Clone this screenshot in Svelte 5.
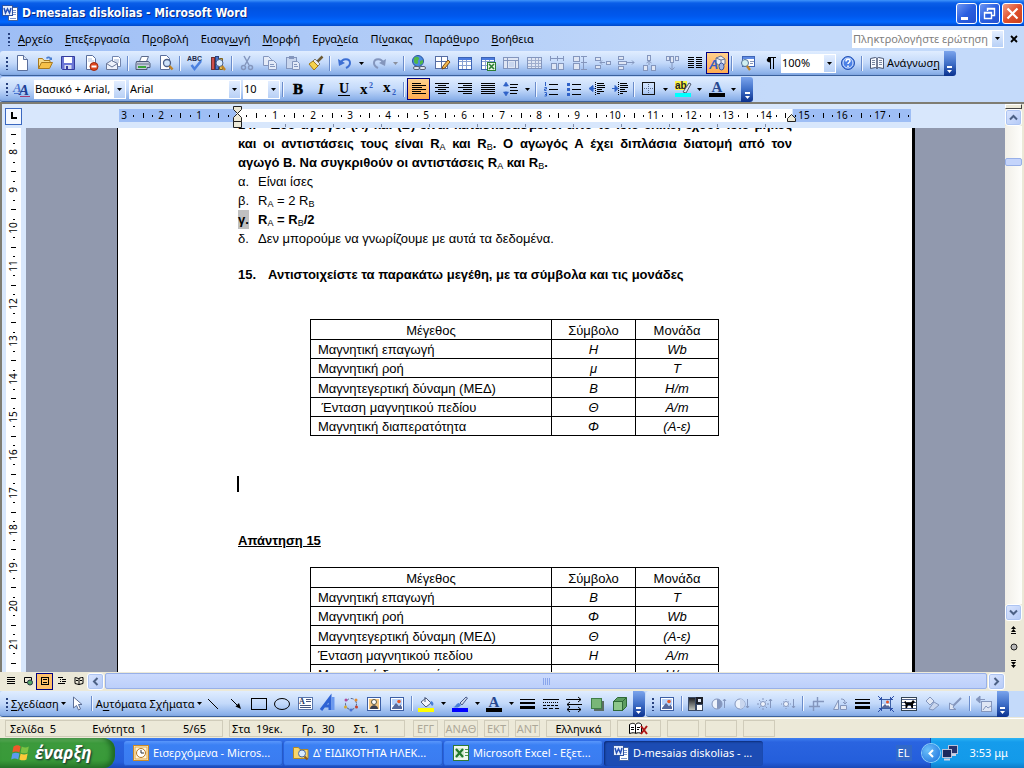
<script>
  const G = '#8496bd';
  const L = '#c9d6ee';
  const page = '<path d="M3.5.5h6l4 4v11h-10z" fill="#fff" stroke="#5a6f9c"/><path d="M9.5.5v4h4" fill="#dbe5f7" stroke="#5a6f9c"/>';
  const lines = (rows, c = '#000') => rows.map(([x, y, w]) => `<path d="M${x} ${y}.5h${w}" stroke="${c}"/>`).join('');
  const grid = (c, head) => `<rect x="1.5" y="2.5" width="13" height="12" fill="#fff" stroke="${c}"/><rect x="2" y="3" width="12" height="2" fill="${head}"/><path d="M2 6.5h12M2 10.5h12M5.5 5v9M9.5 5v9" stroke="${c}" opacity=".6"/>`;
  const smallBox = (x, y, w, h) => `<rect x="${x}.5" y="${y}.5" width="${w}" height="${h}" fill="#dfe6f4" stroke="${G}"/>`;
  const picture = '<rect x="1.5" y="1.5" width="13" height="13" fill="#fff" stroke="#3c5fa5"/><rect x="3" y="3" width="10" height="6" fill="#b9d4fb"/><circle cx="10" cy="5.5" r="1.8" fill="#e2562a"/><path d="M3 12l4-5 3 3 1.5-1.5L13 11v2H3z" fill="#56699c"/>';
  const glyph = (t, x, y, size, fill = '#000', more = '') => `<text x="${x}" y="${y}" font-family="Liberation Serif, serif" font-weight="bold" font-size="${size}" fill="${fill}" ${more}>${t}</text>`;
  const mid = 'text-anchor="middle"';
  const letterA = (c) => glyph('A', 8, 11, 15, '#27488f', mid) + `<rect x="0" y="12" width="16" height="4" fill="${c}"/>`;

  const icons = {
    new: page,
    open: '<path d="M1.5 13.5v-10h4l1.5 2h6v3" fill="#f8dc8c" stroke="#a8791e"/><path d="M1.5 13.5l3-6h11l-3 6z" fill="#f5c04a" stroke="#a8791e"/><path d="M9 3c1-2 4-2 5 0l1-1v3h-3l1-1c-1-1-2-1-3 0z" fill="#4a7ed0"/>',
    save: '<path d="M1.5 1.5h13v13h-12l-1-1z" fill="#6a76d6" stroke="#343c9c"/><rect x="4" y="2" width="8" height="6" fill="#fff"/><rect x="4.5" y="10" width="7" height="4" fill="#d5dbf1"/><rect x="6" y="11" width="2" height="3" fill="#343c9c"/>',
    perm: '<path d="M3.5.5h6l3 3v11h-9z" fill="#fff" stroke="#5a6f9c"/><path d="M5 4h4M5 6h6" stroke="#b2c0dc"/><circle cx="11" cy="11.5" r="4" fill="#e0481f" stroke="#a02a10"/><rect x="8.5" y="10.5" width="5" height="2" fill="#fff"/>',
    mail: '<path d="M6.5 1.5h6l2 2v8h-8z" fill="#fff" stroke="#7184ad"/><path d="M8 5h5M8 7h5" stroke="#9fb2d6"/><path d="M.5 8.5l5-3 6 3v6H.5z" fill="#eef2fb" stroke="#6b7899"/><path d="M.5 8.5l5.5 3.5 5.5-3.5" fill="none" stroke="#6b7899"/>',
    print: '<path d="M4.5 6.5l2-5h7l-2 5" fill="#fff" stroke="#5b6a8b"/><path d="M1.5 6.5h12l1.5 2v4h-3v2h-11v-6z" fill="#c3cbdc" stroke="#4b5877"/><path d="M3 12h8" stroke="#3aa53a" stroke-width="2"/><path d="M2 9h12" stroke="#66748f"/>',
    preview: '<path d="M2.5.5h6l3 3v11h-9z" fill="#fff" stroke="#5a6f9c"/><circle cx="9" cy="8" r="3.5" fill="#cfe4fb" stroke="#4c6089" stroke-width="1.3"/><path d="M11.5 11l3 3.5" stroke="#c08428" stroke-width="2.5"/>',
    spell: '<text x="0" y="6" font-family="Liberation Sans, sans-serif" font-size="7" font-weight="bold" fill="#222c4c">ABC</text><path d="M4.5 10l3 4L14 6" fill="none" stroke="#4a80e0" stroke-width="2.5"/>',
    research: '<rect x="1.5" y="2.5" width="3" height="12" fill="#cf4f4a" stroke="#70302f"/><rect x="5.5" y="1.5" width="3" height="13" fill="#4a72c8" stroke="#28437e"/><path d="M9.5 3.5h3v11h-3z" fill="#e3bd52" stroke="#7c621c"/><circle cx="9.5" cy="8" r="3.5" fill="#d8eafd" stroke="#49608c"/><path d="M12 11l3 4" stroke="#c08428" stroke-width="2.4"/>',
    cut: `<path d="M5 1l5 9M11 1L6 10" stroke="${G}" stroke-width="1.5"/><circle cx="4.5" cy="12.5" r="2" fill="none" stroke="${G}" stroke-width="1.5"/><circle cx="11.5" cy="12.5" r="2" fill="none" stroke="${G}" stroke-width="1.5"/>`,
    copy: `<path d="M1.5 1.5h5l3 3v6h-8z" fill="#e4ebf8" stroke="${G}"/><path d="M6.5 5.5h5l3 3v6h-8z" fill="#e4ebf8" stroke="${G}"/><path d="M8 9.5h4M8 11.5h5" stroke="${G}"/>`,
    paste: `<rect x="1.5" y="2.5" width="10" height="11" fill="${L}" stroke="${G}"/><rect x="4" y="1" width="5" height="3" fill="${G}"/><path d="M7.5 6.5h5l2 2v6h-7z" fill="#e4ebf8" stroke="${G}"/><path d="M9 9.5h3M9 11.5h4" stroke="${G}"/>`,
    painter: '<path d="M14.5 1.5l-5 5" stroke="#6d5a34" stroke-width="2.5"/><path d="M7 4l5 5-2 2-5-5z" fill="#e8e8ee" stroke="#7d7a70"/><path d="M5 6l5 5-4 4L1 9z" fill="#f5d24c" stroke="#a37b18"/>',
    undo: '<path d="M4 8c1-5 9-5 9 0 0 3-2 4-4 5" fill="none" stroke="#3d6fd3" stroke-width="2"/><path d="M1 4l1 7 6-3z" fill="#3d6fd3"/>',
    redo: `<path d="M12 8C11 3 3 3 3 8c0 3 2 4 4 5" fill="none" stroke="${G}" stroke-width="2"/><path d="M15 4l-1 7-6-3z" fill="${G}"/>`,
    link: '<circle cx="7" cy="6" r="5.5" fill="#4a8ae0" stroke="#2a55a0"/><path d="M3 3c3-2 4-1 5 0s-2 2-1 4-3 3-4 0zM9 6l3-1v3l-3 2z" fill="#4fb748"/><rect x="2.5" y="11.5" width="6" height="3" rx="1.5" fill="#dfe4ee" stroke="#566178"/><rect x="8.5" y="11.5" width="6" height="3" rx="1.5" fill="#dfe4ee" stroke="#566178"/>',
    tables: '<rect x="1.5" y="1.5" width="12" height="12" fill="#fff" stroke="#566ea4"/><path d="M1.5 6.5h12M7.5 1.5v12" stroke="#566ea4"/><path d="M8 14l1-3 5-6 2 2-5 6z" fill="#f4b84a" stroke="#7a4c18"/>',
    table: grid('#3c64b5', '#4b7be0'),
    excel: grid('#3c64b5', '#4b7be0') + '<rect x="7.5" y="7.5" width="8" height="8" fill="#e5f3e2" stroke="#2b7d32"/><path d="M9 9l5 5M14 9l-5 5" stroke="#2b7d32" stroke-width="1.6"/>',
    insCols: `<rect x=".5" y="2.5" width="15" height="11" fill="#dfe6f4" stroke="${G}"/><path d="M1 5.5h14M4.5 3v10M12.5 6v7" stroke="${G}"/><rect x="6" y="7" width="5" height="5" fill="${L}"/>`,
    grid2: `<rect x="1.5" y="2.5" width="14" height="11" fill="#dfe6f4" stroke="${G}"/><path d="M2 5.5h13M2 8.5h13M2 11.5h13M5.5 3v11M9.5 3v11M12.5 3v11" stroke="${G}" opacity=".7"/>`,
    distR: `<path d="M1 3.5h14M1.5 1v5M8.5 1v5M14.5 1v5" stroke="${G}"/>` + smallBox(2, 8, 5, 6) + smallBox(9, 8, 5, 6),
    distC: smallBox(1, 1, 6, 5) + smallBox(1, 8, 6, 6) + `<path d="M11.5 1v14M9 1.5h6M9 7.5h6M9 14.5h6" stroke="${G}"/>`,
    c1: smallBox(0, 2, 5, 3) + smallBox(0, 10, 5, 3) + smallBox(11, 6, 4, 3) + `<path d="M5 7.5h5M5 7.5l2-2M5 7.5l2 2" stroke="${G}"/>`,
    c2: smallBox(0, 1, 5, 3) + smallBox(0, 6, 8, 3) + smallBox(0, 11, 5, 3) + `<path d="M9 7.5h7M16 7.5l-2-2M16 7.5l-2 2" stroke="${G}"/>`,
    c3: smallBox(6, 0, 3, 5) + smallBox(2, 10, 4, 5) + smallBox(10, 10, 4, 5) + `<path d="M8 6v4M5.5 8l2.5-2 2.5 2" fill="none" stroke="${G}"/>`,
    c4: smallBox(2, 1, 3, 4) + smallBox(6, 1, 3, 6) + smallBox(11, 1, 3, 4) + `<path d="M8 8v7M5.5 12.5L8 15l2.5-2.5" fill="none" stroke="${G}"/>`,
    columns: lines([[1, 2, 6], [9, 2, 6], [1, 4, 6], [9, 4, 6], [1, 6, 6], [9, 6, 6], [1, 8, 6], [9, 8, 6], [1, 10, 6], [9, 10, 6], [1, 12, 6], [9, 12, 6]]),
    drawing: '<path d="M6 3l5-2 4 3v5l-5 2-4-3z" fill="#e9edf5" stroke="#6a7492"/><path d="M6 3l5 2 4-1M11 5v6" fill="none" stroke="#6a7492"/><text x="-1" y="14" font-family="Liberation Sans, sans-serif" font-weight="bold" font-style="italic" font-size="13" fill="#3a5fc4">A</text><ellipse cx="11.5" cy="11.5" rx="2.5" ry="3.5" fill="#9fb5e8" stroke="#3f579e"/>',
    docmap: '<rect x="3.5" y="1.5" width="12" height="10" fill="#fff" stroke="#3e65b6"/><path d="M4 3h11" stroke="#5f8be4" stroke-width="2"/><path d="M11 6.5h4M11 8.5h3" stroke="#8797bb"/><circle cx="6" cy="8" r="3.5" fill="#d1f0f0" stroke="#54769a"/><path d="M8 11l3 4" stroke="#c08428" stroke-width="2.4"/>',
    help: '<circle cx="8" cy="8" r="6.5" fill="#4b80e6" stroke="#2653b4"/><circle cx="8" cy="8" r="5" fill="none" stroke="#dce9ff"/><path d="M6 6.5c0-3 4-3 4-.5 0 1.5-2 1.5-2 3M8 10.5v1.5" fill="none" stroke="#fff" stroke-width="1.5"/>',
    book: '<path d="M1.5 3.5l5-1 1.5 1v10l-1.5-1-5 1zM14.5 3.5l-5-1L8 3.5v10l1.5-1 5 1z" fill="#f7f9ff" stroke="#4a5672"/><path d="M3 5.5h3M3 7.5h3M3 9.5h3M10 5.5h3M10 7.5h3M10 9.5h3" stroke="#7a869f"/>',
    styles: glyph('A', -1, 11, 13, '#4a74cf', 'font-style="italic"') + glyph('A', 5, 14, 15, '#203f96', 'font-style="italic"') + '<path d="M6 15.5h10" stroke="#a43a70"/><path d="M0 12.5h5" stroke="#4a74cf"/>',
    bold: glyph('B', 8, 13, 15, '#000', mid + ' stroke="#000" stroke-width=".6"'),
    italic: glyph('I', 8, 13, 15, '#000', mid + ' font-style="italic"'),
    underline: glyph('U', 8, 12, 14, '#000', mid) + '<path d="M2 14.5h12" stroke="#000"/>',
    sup: glyph('x', 1, 13, 15) + glyph('2', 10, 7, 8, '#2f5ac0'),
    sub: glyph('x', 1, 11, 15) + glyph('2', 10, 14, 8, '#2f5ac0'),
    left: lines([[1, 2, 9], [1, 4, 14], [1, 6, 10], [1, 8, 14], [1, 10, 9], [1, 12, 14]]),
    center: lines([[1, 2, 14], [4, 4, 8], [1, 6, 14], [4, 8, 8], [1, 10, 14], [4, 12, 8]]),
    right: lines([[1, 2, 14], [6, 4, 9], [1, 6, 14], [6, 8, 9], [1, 10, 14], [6, 12, 9]]),
    just: lines([[1, 2, 14], [1, 4, 14], [1, 6, 14], [1, 8, 14], [1, 10, 14], [1, 12, 14]]),
    spacing: lines([[7, 3, 8], [7, 6, 7], [7, 9, 8], [7, 12, 7]]) + '<path d="M3 1L.5 5h5zM3 15L.5 11h5zM3 4v2M3 10v2" fill="#2f62c8" stroke="#2f62c8" stroke-width=".6"/>',
    nums: lines([[6, 3, 9], [6, 8, 9], [6, 13, 9]]) + '<path d="M2.5 1v4M1.5 6.5h2v1.5h-2v1.5h2M1.5 11.5h2v3.5h-2M2 13.5h1" fill="none" stroke="#2f62c8"/>',
    bullets: lines([[6, 3, 9], [6, 8, 9], [6, 13, 9]]) + '<rect x="1" y="2" width="3" height="3" fill="#2f62c8"/><rect x="1" y="7" width="3" height="3" fill="#2f62c8"/><rect x="1" y="12" width="3" height="3" fill="#2f62c8"/>',
    outdent: lines([[8, 2, 7], [8, 4, 8], [8, 6, 8], [8, 8, 5], [8, 10, 7], [8, 12, 3]]) + '<path d="M6.5 1v14" stroke="#000" stroke-dasharray="1 1"/><path d="M0 7.5l4-3v6zM4 7.5h2" fill="#2f62c8" stroke="#2f62c8"/>',
    indent: lines([[8, 2, 7], [8, 4, 8], [8, 6, 8], [8, 8, 5], [8, 10, 7], [8, 12, 3]]) + '<path d="M6.5 1v14" stroke="#000" stroke-dasharray="1 1"/><path d="M6 7.5l-3-3v6zM0 7.5h3" fill="#2f62c8" stroke="#2f62c8"/>',
    border: '<rect x="1.5" y="1.5" width="12" height="12" fill="none" stroke="#111"/><path d="M3 7.5h9M7.5 3v9" stroke="#5d6b8a" stroke-dasharray="1 1"/>',
    highlight: '<rect x="0" y="0" width="12" height="9" fill="#f8f448"/><text x="0" y="8" font-family="Liberation Sans, sans-serif" font-weight="bold" font-size="10" fill="#222">ab</text><path d="M8 11l6-9 2 1-5 9z" fill="#dfe6f2" stroke="#505a70"/><rect y="12" width="16" height="4" fill="#00ffff"/>',
    fontA: letterA('#000'),
    pointer: '<path d="M4.5 1v11l3-2.5 2 4.5 2-1-2-4.5h3.5z" fill="#fff" stroke="#5d6f97"/>',
    line: '<path d="M3 3l10 10" stroke="#000"/>',
    arrow: '<path d="M3 3l7 7" stroke="#000"/><path d="M13 13L7.5 10.5l3.5-3.5z"/>',
    rect: '<rect x=".5" y="2.5" width="15" height="11" fill="none" stroke="#000"/>',
    oval: '<ellipse cx="8" cy="8" rx="7.5" ry="5.5" fill="none" stroke="#000"/>',
    textbox: '<rect x="1.5" y="1.5" width="14" height="12" fill="#fff" stroke="#5876ad"/>' + glyph('A', 2, 8, 8, '#22345f') + '<path d="M9 3.5h5M9 5.5h5M3 9.5h11M3 11.5h11" fill="none" stroke="#43567f"/>',
    wordart: '<path d="M1 14L10 2v12M4 10h6" fill="none" stroke="#2f63d4" stroke-width="3"/><path d="M13 1v13" stroke="#6a98ef" stroke-width="3"/>',
    diagram: '<circle cx="8" cy="8" r="5.5" fill="none" stroke="#54658a" stroke-dasharray="3 2"/><circle cx="3" cy="4" r="1.5" fill="#b04a9c"/><circle cx="13" cy="4" r="1.5" fill="#e28a2a"/><circle cx="2.5" cy="11" r="1.5" fill="#d8a92b"/><circle cx="8" cy="14" r="1.5" fill="#4a72d2"/><circle cx="13.5" cy="11" r="1.5" fill="#c8402c"/>',
    clip: '<rect x="1.5" y="1.5" width="13" height="13" fill="#fff" stroke="#3c5fa5"/><rect x="3" y="3" width="10" height="10" fill="#f4c680"/><circle cx="8" cy="6" r="2.5" fill="#fff" stroke="#554"/><path d="M4 13c0-5 8-5 8 0z" fill="#3a3f50"/>',
    picture,
    fill: '<path d="M3 6l5-4 5 5-5 4z" fill="#f2f4fa" stroke="#4d5a7a"/><path d="M7 1v5" stroke="#4d5a7a"/><path d="M13 5c3 1 3 4 1 5l-2-3z" fill="#4a7ed8"/><rect y="12" width="16" height="4" fill="#ffff00"/>',
    lineColor: '<path d="M1 11c3 0 3-4 6-4l2 2c-2 3-5 3-8 2z" fill="#4a7ed8"/><path d="M8 7l6-6 1.5 1L10 9z" fill="#cfd8ea" stroke="#4a5d8c"/><rect y="12" width="16" height="4" fill="#0000ff"/>',
    weight: '<path d="M0 3.5h15" stroke="#000"/><path d="M0 7h15" stroke="#000" stroke-width="2"/><path d="M0 11.5h15" stroke="#000" stroke-width="3"/>',
    dash: '<path d="M0 3.5h16" stroke="#000"/><path d="M0 6.5h16" stroke="#000" stroke-dasharray="1 1"/><path d="M0 9.5h16" stroke="#000" stroke-dasharray="3 1"/><path d="M0 12.5h16" stroke="#000" stroke-dasharray="4 2"/>',
    arrows: '<path d="M0 3.5h15M1 8.5h15M1 13.5h14M12 1l3 2.5L12 6M4 6L1 8.5 4 11M4 11l-3 2.5L4 16M12 11l3 2.5L12 16" fill="none" stroke="#000"/>',
    shadow: '<rect x="5" y="5" width="10" height="10" fill="#5a6d64"/><rect x="2.5" y="2.5" width="10" height="10" fill="#79b678" stroke="#3f7f48"/>',
    cube: '<path d="M1.5 5.5l4-4h9v9l-4 4h-9z" fill="#5c9d60" stroke="#2e6a38"/><rect x="1.5" y="5.5" width="9" height="9" fill="#8dc78a" stroke="#2e6a38"/><path d="M10.5 5.5l4-4" stroke="#2e6a38"/>',
    color: '<defs><linearGradient id="gr" x2="0" y2="1"><stop stop-color="#16181c"/><stop offset="1" stop-color="#c4c8c0"/></linearGradient></defs><rect x=".5" y="1.5" width="7" height="13" fill="url(#gr)" stroke="#3a4a66"/><rect x="8" y="1" width="7" height="7" fill="#1c2028"/><rect x="8.5" y="8.5" width="6" height="6" fill="#fff" stroke="#3a4a66"/><rect x="10" y="3" width="3" height="3" fill="#dfe6f4"/>',
    con1: `<circle cx="6" cy="8" r="5" fill="#eef3fc" stroke="${G}"/><path d="M6 3a5 5 0 0 1 0 10z" fill="${G}"/><path d="M13.5 3v9M12 5l1.5-2L15 5" fill="none" stroke="${G}"/>`,
    con2: `<circle cx="6" cy="8" r="5" fill="#eef3fc" stroke="${G}"/><path d="M6 3a5 5 0 0 1 0 10z" fill="${L}"/><path d="M13.5 3v9M12 10l1.5 2 1.5-2" fill="none" stroke="${G}"/>`,
    bri1: `<circle cx="6" cy="8" r="2.5" fill="#eef3fc" stroke="${G}"/><path d="M6 2v2M6 12v2M0 8h2M10 8h2M2 4l1.5 1.5M10 4L8.5 5.5M2 12l1.5-1.5M10 12l-1.5-1.5M13.5 3v9M12 5l1.5-2L15 5" fill="none" stroke="${G}"/>`,
    bri2: `<circle cx="6" cy="8" r="2.5" fill="#eef3fc" stroke="${G}"/><path d="M6 3v1M6 12v1M1 8h1M10 8h1M3 5l.5.5M9 5l-.5.5M3 11l.5-.5M9 11l-.5-.5M13.5 3v9M12 10l1.5 2 1.5-2" fill="none" stroke="${G}"/>`,
    crop: `<path d="M8.5 1v4M4 5.5h11M4.5 5v6M0 10.5h11M8.5 5v6M4.5 11v4" fill="none" stroke="${G}" stroke-width="1.4"/>`,
    rotate: `<path d="M1.5 13.5L6.5 4v9.5zM8.5 13.5v-4h6v4z" fill="#dfe6f4" stroke="${G}"/><path d="M9 3c3 0 4 1 4 4M11 6l2 2 2-2" fill="none" stroke="${G}"/>`,
    compress: '<rect x="3.5" y="3.5" width="9" height="9" fill="#fff" stroke="#3c5fa5"/><rect x="4" y="4" width="8" height="4" fill="#b9d4fb"/><circle cx="9.5" cy="6" r="1.5" fill="#e2562a"/><path d="M4 11l3-3 2 2 1-1 2 2v1H4z" fill="#56699c"/><path d="M0 0l4 4M16 0l-4 4M0 16l4-4M16 16l-4-4M1 3.5h2.5V1M15 3.5h-2.5V1M1 12.5h2.5V15M15 12.5h-2.5V15" fill="none" stroke="#2d50a8"/>',
    wrap: '<rect x=".5" y="1.5" width="15" height="13" fill="#fff" stroke="#345"/><path d="M1 3.5h14M1 6.5h14M1 9.5h14M1 12.5h14" stroke="#4c6089"/><path d="M3 6l2-1v1.5h5L12 4l2 2-2 2v4h-1.5l-1-3H7l-1 3H4.5V8z"/>',
    format: `<path d="M2 5l4-4 4 4-4 4z" fill="#dfe6f4" stroke="${G}"/><path d="M10 6l5 3-6 5-4-1z" fill="${L}" stroke="${G}"/>`,
    transp: `<path d="M14 2l-8 8" stroke="${G}" stroke-width="2"/><path d="M2.5 7v6.5H9L6 11.5l1-2-2-1z" fill="#dfe6f4" stroke="${G}"/>`,
    reset: `<rect x="5.5" y="5.5" width="10" height="10" fill="#dfe6f4" stroke="${G}"/><path d="M7 14l3-4 2 2 3-2" fill="none" stroke="${G}"/><path d="M9 3.5H3M4 0L0 3.5 4 7z" fill="${G}" stroke="${G}"/>`,
    pilcrow: '<path d="M8.5 2v12M11.5 2v12M6 2.5h8" fill="none" stroke="#000"/><path d="M8.5 2.5v5c-5 0-5-5 0-5z"/>',
    vNormal: lines([[4, 4, 8], [4, 6, 8], [4, 8, 8], [4, 10, 8]]),
    vWeb: '<path d="M4.5 4.5h7v3M4.5 4.5v5h3" fill="none" stroke="#000"/><circle cx="10" cy="9.5" r="2.5" fill="#57a868" stroke="#234"/>',
    vPrint: '<rect x="4.5" y="4.5" width="7" height="7" fill="none" stroke="#000"/><path d="M6 6.5h4M6 9.5h4" stroke="#000"/>',
    vOutline: lines([[4, 4, 5], [6, 6, 1], [8, 6, 4], [6, 8, 1], [8, 8, 4], [4, 10, 7]]),
    vRead: '<path d="M4.5 4.5l3 1 3-1h1.5v6l-4 1-4-1v-6zM8 5v7M5 7.5h2M9 7.5h2" fill="none" stroke="#000"/>',
    word: '<rect x="6.5" y="2.5" width="9" height="13" fill="#fff" stroke="#41629f"/><path d="M11 5.5h3M11 7.5h3M11 9.5h3M8 13.5h6" stroke="#7c98cd"/><rect x=".5" y=".5" width="10" height="10" fill="#e8effc" stroke="#2c53a3"/><path d="M2 3l1.5 5 2-4 2 4L9 3" fill="none" stroke="#2450b8" stroke-width="1.5"/>',
    outlook: '<rect x=".5" y=".5" width="15" height="15" fill="#fff4d8" stroke="#c88a2a"/><rect x="2" y="2" width="12" height="12" fill="none" stroke="#e4a94a"/><circle cx="8" cy="8" r="4.5" fill="#fff" stroke="#b7771c"/><path d="M8 5v3h3" fill="none" stroke="#333"/>',
    folder: '<path d="M.5 13.5v-11h5l1.5 2h8v9z" fill="#f7d66c" stroke="#b38a26"/><circle cx="9" cy="8.5" r="3.5" fill="#d7ebff" stroke="#4c6a9c"/><path d="M11.5 11.5l3 3" stroke="#8a5a20" stroke-width="2"/>',
    xl: '<rect x=".5" y=".5" width="15" height="15" fill="#f0f8ee" stroke="#2f7a35"/><rect x="2" y="3" width="9" height="10" fill="#d5ead2"/><path d="M3 4l7 8M10 4l-7 8" stroke="#237a2c" stroke-width="2.2"/><path d="M12 4.5h3M12 7.5h3M12 10.5h3" stroke="#4f9a54"/>',
    flag: '<path d="M3 3c3-2 5-1 6 0L8 8C6 7 4 7 2 8z" fill="#f0592a"/><path d="M10 3c2 1 4 1 6 0l-1 5c-2 1-4 1-6 0z" fill="#7cc243"/><path d="M2 9c2-1 4-1 6 0l-1 5c-2-1-4-1-6 0z" fill="#5a9bf0"/><path d="M9 9c2 1 4 1 6 0l-1 5c-2 1-4 1-6 0z" fill="#fbc93a"/>',
    net: '<rect x="6.5" y=".5" width="9" height="8" fill="#27346c" stroke="#b9c3da"/><path d="M9 10h5" stroke="#cdd5e6" stroke-width="2"/><rect x=".5" y="4.5" width="9" height="8" fill="#1c2a5e" stroke="#b9c3da"/><path d="M2 14.5h6" stroke="#cdd5e6" stroke-width="2"/>'
  };

  const S = 'sep';
  const b = (i, label, o = {}) => ({ i, label, ...o });
  const drop = { d: true };
  const standardA = [
    b('new', 'Δημιουργία'), b('open', 'Άνοιγμα'), b('save', 'Αποθήκευση'), b('perm', 'Δικαιώματα'), b('mail', 'Ηλεκτρονικό ταχυδρομείο'), S,
    b('print', 'Εκτύπωση'), b('preview', 'Προεπισκόπηση'), S, b('spell', 'Ορθογραφία'), b('research', 'Έρευνα'), S,
    b('cut', 'Αποκοπή'), b('copy', 'Αντιγραφή'), b('paste', 'Επικόλληση'), b('painter', 'Πινέλο μορφοποίησης'), S,
    b('undo', 'Αναίρεση', drop), b('redo', 'Ακύρωση αναίρεσης', { d: true, off: true }), S,
    b('link', 'Υπερ-σύνδεση'), b('tables', 'Πίνακες και περιγράμματα'), b('table', 'Εισαγωγή πίνακα'), b('excel', 'Φύλλο Excel'),
    b('insCols', 'Κελιά'), b('grid2', 'Διαίρεση κελιών'), b('distR', 'Κατανομή στηλών'), b('distC', 'Κατανομή γραμμών'),
    b('c1', 'Συγχώνευση'), b('c2', 'Εισαγωγή γραμμής'), b('c3', 'Διαγραφή'), b('c4', 'Εισαγωγή στήλης'),
    b('columns', 'Στήλες'), b('drawing', 'Σχεδίαση', { on: true }), S, b('docmap', 'Χάρτης εγγράφου'), b('pilcrow', 'Εμφάνιση όλων')
  ];
  const formatting = [
    S, b('bold', 'Έντονα'), b('italic', 'Πλάγια'), b('underline', 'Υπογράμμιση'), b('sup', 'Εκθέτης'), b('sub', 'Δείκτης'), S,
    b('left', 'Στοίχιση αριστερά', { on: true }), b('center', 'Στοίχιση στο κέντρο'), b('right', 'Στοίχιση δεξιά'), b('just', 'Πλήρης στοίχιση'),
    b('spacing', 'Διάστιχο', drop), S, b('nums', 'Αρίθμηση'), b('bullets', 'Κουκκίδες'), b('outdent', 'Μείωση εσοχής'), b('indent', 'Αύξηση εσοχής'), S,
    b('border', 'Περίγραμμα', drop), b('highlight', 'Επισήμανση', drop), b('fontA', 'Χρώμα γραμματοσειράς', drop)
  ];
  const shapes = [
    b('line', 'Γραμμή'), b('arrow', 'Βέλος'), b('rect', 'Ορθογώνιο'), b('oval', 'Έλλειψη'), b('textbox', 'Πλαίσιο κειμένου'), b('wordart', 'WordArt'),
    b('diagram', 'Διάγραμμα'), b('clip', 'Εικόνα Clip Art'), b('picture', 'Εικόνα'), S, b('fill', 'Χρώμα γεμίσματος', drop), b('lineColor', 'Χρώμα γραμμής', drop),
    b('fontA', 'Χρώμα γραμματοσειράς', drop), b('weight', 'Στυλ γραμμής'), b('dash', 'Στυλ παύλας'), b('arrows', 'Στυλ βέλους'), b('shadow', 'Στυλ σκίασης'), b('cube', 'Στυλ 3Δ')
  ];
  const pictureTools = [
    b('picture', 'Εισαγωγή εικόνας'), S, b('color', 'Χρώμα'), b('con1', 'Περισσότερη αντίθεση'), b('con2', 'Λιγότερη αντίθεση'), b('bri1', 'Περισσότερη φωτεινότητα'), b('bri2', 'Λιγότερη φωτεινότητα'), S,
    b('crop', 'Περικοπή'), b('rotate', 'Περιστροφή'), b('weight', 'Στυλ γραμμής'), b('compress', 'Συμπίεση'), b('wrap', 'Αναδίπλωση'), b('format', 'Μορφοποίηση'), b('transp', 'Διαφάνεια'), S, b('reset', 'Επαναφορά')
  ];
  const views = [b('vNormal', 'Κανονική'), b('vWeb', 'Ιστός'), b('vPrint', 'Εκτύπωση', { on: true }), b('vOutline', 'Διάρθρωση'), b('vRead', 'Ανάγνωση')];

  const menus = [['', 'Α', 'ρχείο'], ['', 'Ε', 'πεξεργασία'], ['Π', 'ρ', 'οβολή'], ['Εισαγ', 'ω', 'γή'], ['', 'Μ', 'ορφή'], ['Εργα', 'λ', 'εία'], ['Πί', 'ν', 'ακας'], ['Παρά', 'θ', 'υρο'], ['', 'Β', 'οήθεια']];

  const rowsQuestion = [['Μαγνητική επαγωγή', 'Η', 'Wb'], ['Μαγνητική ροή', 'μ', 'T'], ['Μαγνητεγερτική δύναμη (ΜΕΔ)', 'Β', 'H/m'], ['\u00a0Ένταση μαγνητικού πεδίου', 'Θ', 'A/m'], ['Μαγνητική διαπερατότητα', 'Φ', '(Α-ε)']];
  const rowsAnswer = [['Μαγνητική επαγωγή', 'Β', 'T'], ['Μαγνητική ροή', 'Φ', 'Wb'], ['Μαγνητεγερτική δύναμη (ΜΕΔ)', 'Θ', '(Α-ε)'], ['Ένταση μαγνητικού πεδίου', 'Η', 'A/m'], ['Μαγνητική διαπερατότητα', 'μ', 'H/m']];

  const cm = 37.8;
  const ruler = (zero, from, to) => {
    const out = [];
    for (let q = from * 4; q <= to * 4; q++) {
      if (q === 0) continue;
      const at = Math.round(zero + (q * cm) / 4);
      out.push({ at, kind: q % 4 === 0 ? 'num' : q % 2 === 0 ? 'half' : 'dot', n: Math.abs(q / 4) });
    }
    return out;
  };
  const hMarks = ruler(118, -3, 17.75);
  const vMarks = ruler(-278, 7.5, 21.75);
  const tabs = Array.from({ length: 11 }, (_, i) => 166 + i * 48);

  const tasks = [
    { i: 'outlook', t: 'Εισερχόμενα - Micros...' },
    { i: 'folder', t: "Δ' ΕΙΔΙΚΟΤΗΤΑ ΗΛΕΚ..." },
    { i: 'xl', t: 'Microsoft Excel - Εξετ...' },
    { i: 'word', t: 'D-mesaias diskolias - ...', on: true }
  ];
</script>

{#snippet icon(name)}
  <svg class="ico" width="16" height="16" viewBox="0 0 16 16" aria-hidden="true">{@html icons[name]}</svg>
{/snippet}

{#snippet tri()}
  <svg class="tri" width="5" height="3" viewBox="0 0 5 3" aria-hidden="true"><path d="M0 0h5L2.5 3z" fill="currentColor" /></svg>
{/snippet}

{#snippet tools(list)}
  {#each list as t}
    {#if t === 'sep'}
      <span class="sep"></span>
    {:else}
      <button class="tool" class:on={t.on} aria-label={t.label}>{@render icon(t.i)}</button>
      {#if t.d}<button class="drop" class:off={t.off} aria-label={t.label + ' επιλογές'}>{@render tri()}</button>{/if}
    {/if}
  {/each}
{/snippet}

{#snippet more()}
  <button class="more" aria-label="Επιλογές γραμμής εργαλείων">
    <svg width="7" height="8" viewBox="0 0 7 8" aria-hidden="true"><path d="M1 1h5" stroke="#fff" stroke-width="2" /><path d="M1 4h5L3.5 7z" fill="#fff" /></svg>
  </button>
{/snippet}

{#snippet combo(label, value, cls)}
  <span class="combo {cls}">
    <select aria-label={label}><option>{value}</option></select>
    <span class="comboArrow">{@render tri()}</span>
  </span>
{/snippet}

{#snippet dataTable(rows)}
  <table>
    <colgroup><col class="wide" /><col class="mid" /><col /></colgroup>
    <thead><tr><th>Μέγεθος</th><th>Σύμβολο</th><th>Μονάδα</th></tr></thead>
    <tbody>
      {#each rows as r}
        <tr><td>{r[0]}</td><td class="sym">{r[1]}</td><td class="sym">{r[2]}</td></tr>
      {/each}
    </tbody>
  </table>
{/snippet}

{#snippet chevron(d)}
  <svg width="9" height="9" viewBox="0 0 9 9" aria-hidden="true"><path {d} fill="none" stroke="#4d6185" stroke-width="2" /></svg>
{/snippet}

<div class="app">
  <header class="title">
    {@render icon('word')}
    <h1>D-mesaias diskolias - Microsoft Word</h1>
    <button class="win" aria-label="Ελαχιστοποίηση"><svg width="19" height="19" viewBox="0 0 19 19"><path d="M4 14.5h7" stroke="#fff" stroke-width="3" /></svg></button>
    <button class="win" aria-label="Επαναφορά"><svg width="19" height="19" viewBox="0 0 19 19"><path d="M7.5 7V4.5h7v7H12M7 5h8M4.5 8.5h7v6h-7zM4 9h8" fill="none" stroke="#fff" stroke-width="1.4" /></svg></button>
    <button class="win close" aria-label="Κλείσιμο"><svg width="19" height="19" viewBox="0 0 19 19"><path d="M4.5 4.5l10 10M14.5 4.5l-10 10" stroke="#fff" stroke-width="2.2" /></svg></button>
  </header>

  <div class="dock">
    <nav class="menu">
      <span class="grip"></span>
      {#each menus as m}
        <button>{m[0]}<u>{m[1]}</u>{m[2]}</button>
      {/each}
      <span class="ask">
        <input aria-label="Ερώτηση" value="Πληκτρολογήστε ερώτηση" />
        <span class="comboArrow">{@render tri()}</span>
      </span>
      <button class="closeDoc" aria-label="Κλείσιμο εγγράφου"><svg width="8" height="8" viewBox="0 0 8 8"><path d="M1 1l6 6M7 1L1 7" stroke="#000" stroke-width="1.8" /></svg></button>
    </nav>

    <div class="row">
      <div class="bar">
        <span class="grip"></span>
        {@render tools(standardA)}
        {@render combo('Ζουμ', '100%', 'zoom')}
        {@render tools([b('help', 'Βοήθεια'), S])}
        <button class="reading">{@render icon('book')}<span>Ανάγνωσ<u>η</u></span></button>
      </div>
      {@render more()}
    </div>

    <div class="row">
      <div class="bar">
        <span class="grip"></span>
        {@render tools([b('styles', 'Στυλ και μορφοποίηση')])}
        {@render combo('Στυλ', 'Βασικό + Arial,', 'style')}
        {@render combo('Γραμματοσειρά', 'Arial', 'font')}
        {@render combo('Μέγεθος γραμματοσειράς', '10', 'size')}
        {@render tools(formatting)}
      </div>
      {@render more()}
    </div>
  </div>

  <main>
    <div class="left">
      <div class="hruler">
        <button class="tabSel" aria-label="Στηλοθέτης"><svg width="8" height="8" viewBox="0 0 8 8"><path d="M2 0v6h5" fill="none" stroke="#000" stroke-width="2" /></svg></button>
        <svg class="scale" width="794" height="24" viewBox="0 0 794 24" aria-hidden="true">
          <rect x="0" y="5" width="117" height="13" fill="#9ebef5" />
          <rect x="117" y="5" width="556" height="13" fill="#fff" />
          <rect x="674" y="5" width="118" height="13" fill="#9ebef5" />
          {#each hMarks as m}
            {#if m.kind === 'num'}
              <text x={m.at} y="15" text-anchor="middle">{m.n}</text>
            {:else}
              <rect x={m.at} y={m.kind === 'half' ? 9 : 11} width="1" height={m.kind === 'half' ? 5 : 2} />
            {/if}
          {/each}
          {#each tabs as t}<rect x={t} y="20" width="1" height="3" fill="#7d8ba8" />{/each}
          <path d="M114.5 2.5h8v3l-4 4-4-4z" fill="#ece9d8" stroke="#222" />
          <path d="M118.5 9.5l4 4v4h-8v-4zM114.5 17.5h8v6h-8z" fill="#ece9d8" stroke="#222" />
          <path d="M672.5 10.5l4 4v3h-8v-3z" fill="#ece9d8" stroke="#222" />
        </svg>
      </div>
      <div class="work">
        <div class="vruler">
          <svg width="15" height="544" viewBox="0 0 15 544" aria-hidden="true">
            {#each vMarks as m}
              {#if m.kind === 'num'}
                <text transform="translate(11 {m.at}) rotate(-90)" text-anchor="middle">{m.n}</text>
              {:else}
                <rect x={m.kind === 'half' ? 5 : 7} y={m.at} width={m.kind === 'half' ? 5 : 2} height="1" />
              {/if}
            {/each}
          </svg>
        </div>
        <div class="desk">
          <article>
            <div class="text">
              <p class="strong">
                <span class="full">14. &nbsp; Δύο αγωγοί (Α) και (Β) είναι κατασκευασμένοι από το ίδιο υλικό, έχουν ίδιο μήκος</span>
                <span class="full">και οι αντιστάσεις τους είναι R<sub>Α</sub> και R<sub>Β</sub>. Ο αγωγός Α έχει διπλάσια διατομή από τον</span>
                <span>αγωγό Β. Να συγκριθούν οι αντιστάσεις R<sub>Α</sub> και R<sub>Β</sub>.</span>
              </p>
              <p class="opt"><span>α.</span>Είναι ίσες</p>
              <p class="opt"><span>β.</span>R<sub>Α</sub> = 2 R<sub>Β</sub></p>
              <p class="opt heavy"><span><mark>γ.</mark></span>R<sub>Α</sub> = R<sub>Β</sub>/2</p>
              <p class="opt"><span>δ.</span>Δεν μπορούμε να γνωρίζουμε με αυτά τα δεδομένα.</p>
              <p class="opt question heavy"><span>15.</span>Αντιστοιχείστε τα παρακάτω μεγέθη, με τα σύμβολα και τις μονάδες</p>
              {@render dataTable(rowsQuestion)}
              <p class="caretLine"><span class="caret"></span></p>
              <h2>Απάντηση 15</h2>
              {@render dataTable(rowsAnswer)}
            </div>
          </article>
        </div>
      </div>
    </div>
    <div class="vscroll">
      <span class="split"></span>
      <button class="sb" aria-label="Επάνω">{@render chevron('M1 6.5L4.5 3 8 6.5')}</button>
      <div class="vtrack"><span class="vthumb"></span></div>
      <button class="sb" aria-label="Κάτω">{@render chevron('M1 2.5L4.5 6 8 2.5')}</button>
      <button class="nav" aria-label="Προηγούμενη σελίδα"><svg width="7" height="8" viewBox="0 0 7 8"><path d="M3.5 0L6 3H1zM3.5 3L6 6H1zM1 7h5v1H1z" /></svg></button>
      <button class="nav" aria-label="Αναζήτηση αντικειμένου"><svg width="8" height="8" viewBox="0 0 8 8"><circle cx="4" cy="4" r="3" fill="#b8b8b8" stroke="#222" /></svg></button>
      <button class="nav" aria-label="Επόμενη σελίδα"><svg width="7" height="8" viewBox="0 0 7 8"><path d="M1 0h5v1H1zM1 2h5L3.5 5zM1 5h5L3.5 8z" /></svg></button>
    </div>
  </main>

  <div class="hscroll">
    {#each views as v}
      <button class="view" class:on={v.on} aria-label={v.label}>{@render icon(v.i)}</button>
    {/each}
    <button class="sb" aria-label="Αριστερά">{@render chevron('M6.5 1L3 4.5 6.5 8')}</button>
    <div class="hthumb"><i></i><i></i><i></i><i></i></div>
    <button class="sb" aria-label="Δεξιά">{@render chevron('M2.5 1L6 4.5 2.5 8')}</button>
  </div>

  <div class="row drawing">
    <div class="bar">
      <span class="grip"></span>
      <button class="word"><span><u>Σ</u>χεδίαση</span>{@render tri()}</button>
      {@render tools([b('pointer', 'Επιλογή αντικειμένων'), S])}
      <button class="word"><span>Α<u>υ</u>τόματα Σχήματα</span>{@render tri()}</button>
      {@render tools(shapes)}
    </div>
    {@render more()}
    <div class="bar second">
      <span class="grip"></span>
      {@render tools(pictureTools)}
    </div>
    {@render more()}
  </div>

  <footer class="status">
    <div class="cell page"><span>Σελίδα&nbsp; 5</span><span>Ενότητα&nbsp; 1</span><span>5/65</span></div>
    <div class="cell pos"><span>Στα&nbsp; 19εκ.</span><span>Γρ.&nbsp; 30</span><span>Στ.&nbsp; 1</span></div>
    <div class="cell dim">ΕΓΓ</div>
    <div class="cell dim wider">ΑΝΑΘ</div>
    <div class="cell dim">ΕΚΤ</div>
    <div class="cell dim">ΑΝΤ</div>
    <div class="cell lang">Ελληνικά</div>
    <div class="cell proof">
      <svg width="22" height="14" viewBox="0 0 22 14" aria-hidden="true"><path d="M1.5 2.5c3-2 5-1 6 0 2-2 4-2 6 0v9c-2-1-4-1-6 0-1-1-3-1-6 0zM7.5 3v8M3 5.5h3M3 7.5h3M9 5.5h3M9 7.5h2" fill="#fff" stroke="#000" /><path d="M13 4l6 8M19 4l-6 8" stroke="#b01818" stroke-width="2" /></svg>
    </div>
    <div class="cell blank"></div>
    <div class="cell blank"></div>
    <div class="cell blank"></div>
  </footer>

  <div class="taskbar">
    <button class="start"><svg width="20" height="20" viewBox="0 0 17 17" aria-hidden="true">{@html icons.flag}</svg>έναρξη</button>
    <div class="tasks">
      {#each tasks as t}
        <button class="task" class:on={t.on}>{@render icon(t.i)}<span>{t.t}</span></button>
      {/each}
    </div>
    <span class="kbd">EL</span>
    <div class="tray">
      <button class="expand" aria-label="Εμφάνιση κρυφών εικονιδίων"><svg width="8" height="9" viewBox="0 0 8 9"><path d="M6 1L2.5 4.5 6 8" fill="none" stroke="#fff" stroke-width="2" /></svg></button>
      {@render icon('net')}
      <time>3:53 μμ</time>
    </div>
  </div>
</div>

<style>
  :global(body) { margin: 0; overflow: hidden; }
  .app { height: 100vh; display: flex; flex-direction: column; overflow: hidden; font: 11px/14px "Noto Sans", "DejaVu Sans", sans-serif; color: #000; background: #ece9d8; }
  .app * { box-sizing: border-box; }
  button { font: inherit; color: inherit; background: none; border: 0; padding: 0; margin: 0; display: flex; align-items: center; justify-content: center; flex: none; white-space: nowrap; }
  svg { display: block; flex: none; }
  .ico { overflow: visible; }
  u { text-underline-offset: 2px; }

  .title { height: 26px; flex: none; display: flex; align-items: center; gap: 2px; padding: 0 1px 0 2px; background: linear-gradient(#3f94fb 0, #0a5ee8 3px, #0053e1 8px, #0058ee 16px, #0068ff 22px, #0048c8 26px); color: #fff; }
  h1 { flex: 1; margin: 0 0 0 2px; font: bold 12px/16px "DejaVu Sans Condensed", "DejaVu Sans", sans-serif; text-shadow: 1px 1px #0a2a80; }
  .win { width: 21px; height: 21px; border: 1px solid #fff; border-radius: 3px; background: linear-gradient(135deg, #6f97f3, #2a5fe0 50%, #2450d0); }
  .close { background: linear-gradient(135deg, #f0a08a, #e0502c 50%, #c8401c); }

  .dock { flex: none; background: linear-gradient(90deg, #9ebef5, #c4dafa 75%); }
  .menu { height: 25px; display: flex; align-items: center; padding-left: 4px; }
  .menu > button { padding: 0 6px; height: 20px; }
  .grip { width: 8px; height: 14px; flex: none; background: radial-gradient(circle at 5px 1px, #27417e 1px, transparent 1px) 0 1px / 8px 4px; }
  .ask { margin-left: auto; width: 152px; height: 18px; display: flex; background: #fff; }
  input { flex: 1; min-width: 0; border: 0; padding: 0 1px; font: inherit; color: #808080; background: none; outline: 0; }

  .row { display: flex; height: 25px; }
  .row + .row { margin-top: 1px; }
  .bar { display: flex; align-items: center; padding: 0 2px; border-radius: 3px 0 0 3px; background: linear-gradient(#e0edff, #c3d9fa 50%, #8db2ea 92%, #7fa4de); border-bottom: 1px solid #3b619c; }
  .tool { width: 23px; height: 22px; }
  .tool.on { border: 1px solid #000080; background: linear-gradient(#ffd08c, #ffab50); }
  .drop { width: 11px; height: 22px; }
  .off { color: #8a8f9c; }
  .sep { width: 6px; height: 15px; flex: none; background: linear-gradient(90deg, transparent 2px, #6a8ccb 2px, #6a8ccb 3px, #f1f6ff 3px, #f1f6ff 4px, transparent 4px); }
  .more { width: 12px; align-items: flex-end; padding-bottom: 2px; border-radius: 0 3px 3px 0; background: linear-gradient(#7ba4ec, #3f6fc8 50%, #0a318e); }
  .combo { position: relative; display: flex; height: 19px; flex: none; background: #fff; margin-right: 3px; }
  select { appearance: none; width: 100%; border: 0; border-radius: 0; background: none; padding: 0 13px 0 1px; font: inherit; color: #000; outline: 0; }
  .combo .comboArrow { position: absolute; right: 1px; top: 1px; bottom: 1px; }
  .comboArrow { width: 11px; display: flex; align-items: center; justify-content: center; background: linear-gradient(#e3eeff, #b8d0f6); pointer-events: none; }
  .ask .comboArrow { margin: 1px; }
  .zoom { width: 55px; margin: 0; }
  .style { width: 92px; margin-left: 1px; }
  .font { width: 112px; margin-right: 2px; }
  .size { width: 37px; margin-right: 0; }
  .reading { gap: 2px; padding: 0 2px 0 4px; height: 22px; }

  main { flex: 1; min-height: 0; display: flex; border-left: 2px solid #7f7d72; border-top: 2px solid #7f7d72; background: #d8e7fc; }
  .left { flex: 1; min-width: 0; display: flex; flex-direction: column; }
  .hruler { height: 24px; flex: none; display: flex; align-items: center; padding-left: 3px; overflow: hidden; }
  .tabSel { width: 17px; height: 17px; border: 1px solid #3a68c0; background: #f4f8ff; }
  .scale { margin-left: 97px; }
  .scale text, .vruler text { font: 10px "Noto Sans", "DejaVu Sans", sans-serif; }
  .work { flex: 1; min-height: 0; display: flex; overflow: hidden; }
  .vruler { width: 24px; flex: none; padding-left: 4px; overflow: hidden; }
  .vruler svg { background: #fff; }
  .desk { flex: 1; min-width: 0; display: flex; background: #9199ae; padding-left: 91px; overflow: hidden; }
  article { flex: 0 1 798px; background: #fff; border-left: 1px solid #000; border-right: 3px solid #000; overflow: hidden; }
  .text { margin-top: -13px; padding: 0 120px; font: 13px/19px "Liberation Sans", Arial, sans-serif; }
  p { margin: 0; }
  .strong, .heavy { font-weight: bold; }
  .strong > span { display: block; white-space: nowrap; }
  .strong > .full { text-align: justify; text-align-last: justify; white-space: normal; height: 19px; }
  sub { font-size: 9px; line-height: 1px; font-weight: normal; vertical-align: -2px; }
  .opt { white-space: nowrap; }
  .opt > span { display: inline-block; width: 20px; }
  .opt.question { margin-top: 17px; margin-bottom: 35px; }
  .opt.question > span { width: 30px; }
  mark { background: #c0c0c0; color: #000; display: inline-block; }
  table { width: 409px; margin-left: 72px; border-collapse: collapse; table-layout: fixed; }
  .wide { width: 241px; }
  .mid { width: 84px; }
  th, td { border: 1px solid #000; padding: 2px 7px 0; height: 19px; line-height: 16px; font-weight: normal; white-space: nowrap; }
  th { height: 20px; text-align: center; }
  tr:nth-child(3) > td { height: 20px; }
  .sym { text-align: center; font-style: italic; }
  .caretLine { padding-top: 40px; height: 95px; }
  .caret { display: block; width: 2px; height: 16px; margin-left: -1px; background: #000; }
  h2 { margin: 0 0 17px; font: bold 13px/19px "Liberation Sans", Arial, sans-serif; text-decoration: underline; }

  .vscroll { width: 19px; flex: none; display: flex; flex-direction: column; align-items: flex-start; background: #ece9d8; }
  .split { width: 17px; height: 5px; border: 1px solid #444; border-top-color: #fff; border-left-color: #fff; }
  .sb { width: 17px; height: 17px; border: 1px solid #fff; border-radius: 3px; background: linear-gradient(135deg, #dbe6ff, #b4c9f6); box-shadow: inset 0 0 0 1px #adc4f2; }
  .vtrack { flex: 1; width: 17px; background: linear-gradient(90deg, #f1efe8, #fefefb); padding-top: 32px; }
  .vthumb { display: block; height: 8px; border: 1px solid #98b0e8; border-radius: 2px; background: #c4d4fb; }
  .nav { width: 17px; height: 17px; }

  .hscroll { height: 18px; flex: none; display: flex; align-items: center; padding: 0 19px 0 2px; }
  .view { width: 17px; height: 17px; }
  .view.on { border: 1px solid #000080; background: #ffc06a; }
  .hthumb { flex: 1; height: 16px; margin: 0 1px; display: flex; gap: 1px; align-items: center; justify-content: center; border: 1px solid #98b0e8; border-radius: 2px; background: linear-gradient(#cbdafd, #bccffa); }
  .hthumb i { width: 1px; height: 7px; background: #8aa6ec; }

  .drawing { height: 26px; flex: none; margin: 1px 0; background: #c4dafa; }
  .drawing .bar { padding-right: 1px; }
  .word { gap: 2px; height: 22px; padding: 0 0 0 1px; }
  .second { margin-left: 1px; }

  .status { height: 20px; flex: none; display: flex; align-items: center; gap: 6px; padding: 0 5px; border-top: 1px solid #fff; }
  .cell { height: 17px; display: flex; align-items: center; justify-content: center; border: 1px solid #d0ccba; flex: none; white-space: nowrap; }
  .page { width: 218px; justify-content: space-between; padding: 0 16px 0 4px; }
  .pos { width: 176px; justify-content: space-between; padding: 0 24px 0 2px; margin-right: 2px; }
  .dim { width: 25px; color: #aca899; }
  .wider { width: 34px; }
  .lang { width: 65px; }
  .proof { width: 44px; }
  .blank { width: 32px; }

  .taskbar { height: 30px; flex: none; display: flex; align-items: stretch; background: linear-gradient(#3f7ff0 0, #2a64e0 4px, #245edb 24px, #1a48b8 30px); color: #fff; }
  .start { width: 115px; justify-content: flex-start; padding-left: 10px; gap: 5px; border-radius: 0 12px 12px 0; background: linear-gradient(#6ab868 0, #3c9a3c 5px, #399a39 22px, #2a7a2c 30px); box-shadow: inset -4px 0 5px #1f6a24; font: italic bold 17px/24px "Open Sans", "Noto Sans", sans-serif; text-shadow: 1px 1px 2px #123; }
  .tasks { flex: 1; min-width: 0; display: flex; align-items: center; gap: 1px; padding-left: 9px; }
  .task { flex: 0 1 159px; min-width: 0; height: 25px; justify-content: flex-start; gap: 4px; padding: 0 9px; border-radius: 3px; background: linear-gradient(#5a97fb, #3b80f4 4px, #3a7bf0); box-shadow: inset -1px -1px 1px #2458c4; }
  .task.on { background: #1c4cb4; box-shadow: inset 1px 1px 2px #0c2c78; }
  .kbd { align-self: center; width: 16px; padding: 1px 0; text-align: center; background: #3168c8; margin-right: 18px; }
  .tray { display: flex; align-items: center; gap: 2px; padding-right: 16px; background: linear-gradient(#2bb4f4 0, #159cec 4px, #139ae9 24px, #0e7cc8 30px); border-left: 1px solid #0f4fb0; }
  .expand { width: 18px; height: 18px; margin-left: -9px; border-radius: 9px; background: radial-gradient(circle at 6px 6px, #6cc0fa, #1a6fdc); box-shadow: 0 0 0 1px #8fd0f8; }
  time { margin-left: 10px; }
</style>
